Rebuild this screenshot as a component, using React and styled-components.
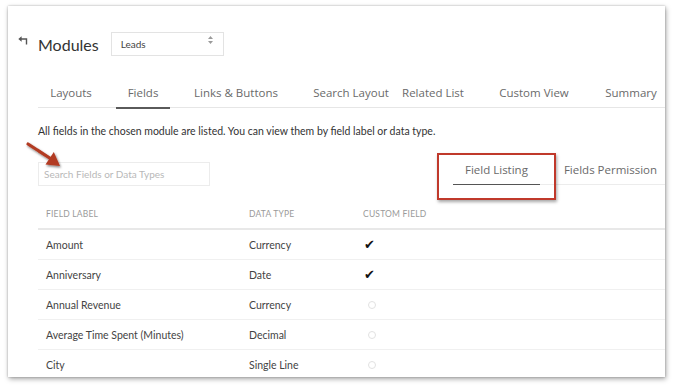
import React from "react";
import styled, { createGlobalStyle } from "styled-components";

const GlobalStyle = createGlobalStyle`
  body {
    margin: 0;
    background: #ffffff;
    font-family: Lato, "Open Sans", Arial, sans-serif;
  }
`;

const tabs = [
  { label: "Layouts", ml: 1, w: 64 },
  { label: "Fields", ml: 13, w: 54, active: true },
  { label: "Links & Buttons", ml: 16, w: 100 },
  { label: "Search Layout", ml: 20, w: 90 },
  { label: "Related List", ml: 2, w: 70 },
  { label: "Custom View", ml: 26, w: 80 },
  { label: "Summary", ml: 27, w: 60 },
];

const rows = [
  { label: "Amount", type: "Currency", custom: true },
  { label: "Anniversary", type: "Date", custom: true },
  { label: "Annual Revenue", type: "Currency", custom: false },
  { label: "Average Time Spent (Minutes)", type: "Decimal", custom: false },
  { label: "City", type: "Single Line", custom: false },
];

const BackIcon = () => (
  <svg width="10" height="9" viewBox="0 0 10 9">
    <path d="M8.5 8.5 V3 H3" fill="none" stroke="#555" strokeWidth="1.4" />
    <path d="M0.3 3 L3.6 0.3 V5.7 Z" fill="#555" />
  </svg>
);

const SortIcon = () => (
  <svg width="7" height="10" viewBox="0 0 7 10">
    <path d="M3.5 1 L6 4 H1 Z" fill="#9a9a9a" />
    <path d="M3.5 9 L6 6 H1 Z" fill="#9a9a9a" />
  </svg>
);

const Pointer = () => (
  <ArrowMark width="46" height="36" viewBox="0 0 46 36">
    <defs>
      <filter id="sh" x="-20%" y="-20%" width="150%" height="150%">
        <feDropShadow dx="1" dy="1.5" stdDeviation="0.9" floodColor="#000" floodOpacity="0.5" />
      </filter>
    </defs>
    <g filter="url(#sh)">
      <path d="M3 3 L27 18.5" stroke="#b23a22" strokeWidth="3.2" strokeLinecap="round" />
      <path d="M35 25 L20.5 23.5 L28.8 11 Z" fill="#b23a22" />
    </g>
  </ArrowMark>
);

export default function App() {
  return (
    <>
      <GlobalStyle />
      <Page>
        <Card>
          <Header>
            <BackIcon />
            <Title>Modules</Title>
            <Select>
              <span>Leads</span>
              <SortIcon />
            </Select>
          </Header>

          <TabBar>
            {tabs.map((t) => (
              <Tab key={t.label} $ml={t.ml} $w={t.w} $active={t.active}>
                {t.label}
              </Tab>
            ))}
          </TabBar>

          <Intro>
            All fields in the chosen module are listed. You can view them by field label or data type.
          </Intro>

          <Toolbar>
            <Pointer />
            <Search placeholder="Search Fields or Data Types" />
            <SubTabs>
              <SubTab $active>Field Listing</SubTab>
              <SubTab>Fields Permission</SubTab>
              <Highlight />
            </SubTabs>
          </Toolbar>

          <Table>
            <HeadRow>
              <HeadCell>Field Label</HeadCell>
              <HeadCell>Data Type</HeadCell>
              <HeadCell>Custom Field</HeadCell>
            </HeadRow>
            {rows.map((r) => (
              <Row key={r.label}>
                <Cell>{r.label}</Cell>
                <Cell>{r.type}</Cell>
                <Cell>{r.custom ? <Check>✔</Check> : <Dot />}</Cell>
              </Row>
            ))}
          </Table>
        </Card>
      </Page>
    </>
  );
}

const Page = styled.div`
  width: 674px;
  height: 388px;
  box-sizing: border-box;
  padding: 6px 9px 11px 8px;
`;

const Card = styled.div`
  width: 657px;
  height: 371px;
  box-sizing: border-box;
  background: #fff;
  box-shadow: 1px 2px 5px rgba(0, 0, 0, 0.35), 0 0 2px rgba(0, 0, 0, 0.25);
  overflow: hidden;
  padding-top: 26px;
`;

const Header = styled.div`
  display: flex;
  align-items: center;
  height: 24px;
  padding-left: 10px;
  svg {
    margin-top: -8px;
  }
`;

const Title = styled.div`
  margin-left: 10px;
  font-size: 16px;
  color: #333;
`;

const Select = styled.div`
  margin-left: 12px;
  width: 113px;
  height: 24px;
  box-sizing: border-box;
  border: 1px solid #e3e3e3;
  display: flex;
  align-items: center;
  justify-content: space-between;
  padding: 0 9px 0 9px;
  font-size: 10px;
  color: #444;
`;

const TabBar = styled.div`
  margin: 24px 0 0 30px;
  height: 27px;
  display: flex;
  border-bottom: 1px solid #e6e6e6;
`;

const Tab = styled.div`
  position: relative;
  margin-left: ${(p) => p.$ml}px;
  width: ${(p) => p.$w}px;
  flex-shrink: 0;
  text-align: center;
  font-family: "Open Sans", Lato, sans-serif;
  font-size: 11.5px;
  line-height: 26px;
  color: #6a6a6a;
  white-space: nowrap;
  &::after {
    content: "";
    display: ${(p) => (p.$active ? "block" : "none")};
    position: absolute;
    left: 0;
    right: 0;
    bottom: -2px;
    height: 2px;
    background: #5a5a5a;
  }
`;

const Intro = styled.div`
  margin: 16px 0 0 30px;
  font-size: 10.5px;
  line-height: 14px;
  color: #333;
`;

const Toolbar = styled.div`
  position: relative;
  margin: 24px 0 0 30px;
  display: flex;
  align-items: flex-start;
`;

const ArrowMark = styled.svg`
  position: absolute;
  left: -13px;
  top: -21px;
`;

const Search = styled.input`
  flex-shrink: 0;
  width: 172px;
  height: 24px;
  box-sizing: border-box;
  border: 1px solid #ececec;
  outline: none;
  padding: 0 5px;
  font-family: Lato, sans-serif;
  font-size: 10px;
  color: #333;
  &::placeholder {
    color: #b8b8b8;
  }
`;

const SubTabs = styled.div`
  position: relative;
  margin-left: 243px;
  display: flex;
  flex: 1;
  min-width: 0;
  border-bottom: 1px solid #ececec;
  height: 22px;
`;

const SubTab = styled.div`
  position: relative;
  flex-shrink: 0;
  padding: 0 12px;
  margin-right: ${(p) => (p.$active ? "12px" : "0")};
  font-family: "Open Sans", Lato, sans-serif;
  font-size: 11.5px;
  line-height: 16px;
  color: #6a6a6a;
  white-space: nowrap;
  &::after {
    content: "";
    display: ${(p) => (p.$active ? "block" : "none")};
    position: absolute;
    left: 0;
    right: 0;
    bottom: -1px;
    height: 1px;
    background: #555;
  }
`;

const Highlight = styled.div`
  position: absolute;
  left: -16px;
  top: -9px;
  width: 119px;
  height: 47px;
  box-sizing: border-box;
  border: 2px solid #c0392b;
  box-shadow: 1px 2px 3px rgba(0, 0, 0, 0.35);
`;

const Table = styled.div`
  margin: 14px 0 0 30px;
`;

const grid = `
  display: grid;
  grid-template-columns: 203px 114px 1fr;
  align-items: center;
  padding-left: 8px;
`;

const HeadRow = styled.div`
  ${grid}
  height: 28px;
  border-bottom: 2px solid #e8e8e8;
`;

const HeadCell = styled.div`
  font-size: 8.5px;
  text-transform: uppercase;
  color: #9a9a9a;
  letter-spacing: 0.2px;
`;

const Row = styled.div`
  ${grid}
  height: 29px;
  border-bottom: 1px solid #f0f0f0;
`;

const Cell = styled.div`
  font-size: 10.5px;
  color: #444;
  display: flex;
  align-items: center;
`;

const Check = styled.span`
  margin-left: 1px;
  font-family: "DejaVu Sans", sans-serif;
  font-size: 13px;
  color: #111;
`;

const Dot = styled.span`
  margin-left: 5px;
  width: 6px;
  height: 6px;
  border-radius: 50%;
  border: 1px solid #e2e2e2;
`;
